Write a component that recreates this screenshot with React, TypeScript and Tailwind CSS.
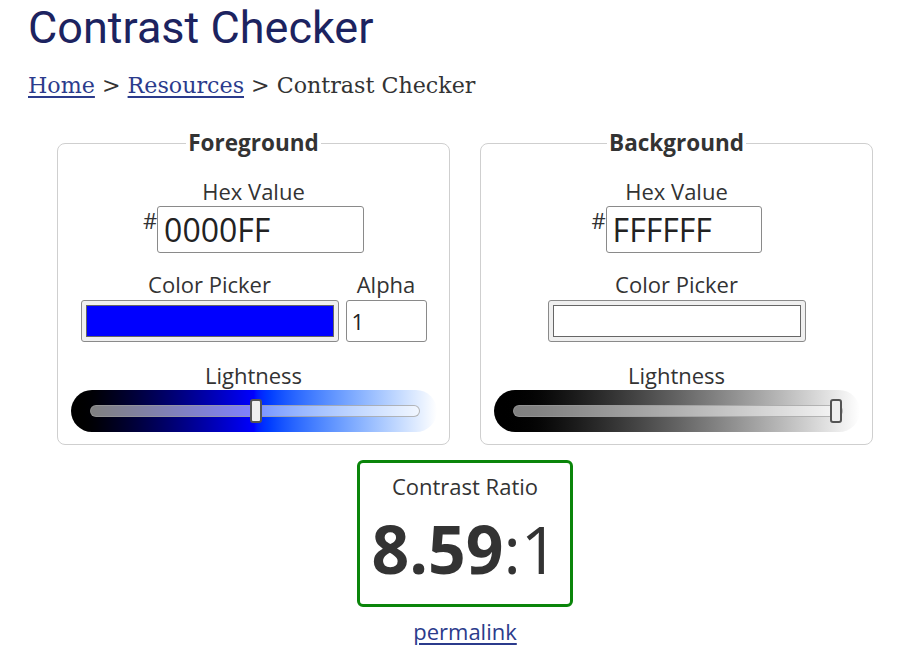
import React from "react";

const sans = { fontFamily: '"Open Sans", sans-serif' };

function Slider({ gradient, thumb }: { gradient: string; thumb: number }) {
  return (
    <div className={`relative mx-auto mt-[1px] h-[42px] w-[366px] rounded-full ${gradient}`}>
      <div className="absolute left-[19px] right-[17px] top-[15px] h-[12px] rounded-full border border-[#9a9a9a]/70 bg-white/50" />
      <div
        className="absolute top-[9px] h-[24px] w-[12px] rounded-[3px] border-2 border-[#555] bg-[#efefef]"
        style={{ left: thumb }}
      />
    </div>
  );
}

function Panel({
  title,
  hex,
  inputW,
  swatch,
  alpha,
  gradient,
  thumb,
}: {
  title: string;
  hex: string;
  inputW: string;
  swatch: string;
  alpha: boolean;
  gradient: string;
  thumb: number;
}) {
  return (
    <fieldset className="w-[393px] rounded-[8px] border border-[#cfcfcf] px-[12px] pb-[12px] pt-[20px] text-[#333]">
      <legend className="mx-auto px-[2px] text-[22.5px] font-bold leading-[28px]">{title}</legend>
      <div className="text-center text-[22px] leading-[28px]">Hex Value</div>
      <div className="mt-[1px] flex items-start justify-center">
        <span className="text-[22px] leading-[28px]">#</span>
        <input
          readOnly
          value={hex}
          className={`h-[47px] ${inputW} rounded-[3px] border border-[#8a8a8a] px-[6px] text-[32px] text-[#222] outline-none`}
          style={sans}
        />
      </div>
      <div className="mt-[17px] flex items-start justify-center gap-[7px]">
        <div className="flex flex-col items-center">
          <div className="text-[22px] leading-[28px]">Color Picker</div>
          <div className="mt-[2px] flex h-[42px] w-[258px] items-center justify-center rounded-[3px] border border-[#8a8a8a] bg-[#efefef] px-[4px]">
            <div className={`h-[32px] w-full border border-[#666] ${swatch}`} />
          </div>
        </div>
        {alpha && (
          <div className="flex flex-col items-center">
            <div className="text-[22px] leading-[28px]">Alpha</div>
            <input
              readOnly
              value="1"
              className="mt-[2px] h-[42px] w-[81px] rounded-[3px] border border-[#8a8a8a] px-[5px] text-[22px] text-[#222] outline-none"
              style={sans}
            />
          </div>
        )}
      </div>
      <div className="mt-[19px] text-center text-[22px] leading-[28px]">Lightness</div>
      <Slider gradient={gradient} thumb={thumb} />
    </fieldset>
  );
}

export default function App() {
  return (
    <div className="min-h-[650px] bg-white pl-[28px] pr-[19px] text-[#333]" style={sans}>
      <h1
        className="pt-[2px] text-[45px] font-normal leading-[52px] text-[#1c2360]"
        style={{ fontFamily: 'Roboto, sans-serif' }}
      >
        Contrast Checker
      </h1>
      <nav
        className="mt-[17px] text-[22.2px] leading-[28px] text-[#333]"
        style={{ fontFamily: '"DejaVu Serif", serif' }}
      >
        <a href="#" className="text-[#2b3b8c] underline underline-offset-[3px]">Home</a>
        {" > "}
        <a href="#" className="text-[#2b3b8c] underline underline-offset-[3px]">Resources</a>
        {" > Contrast Checker"}
      </nav>
      <div className="mt-[30px] flex justify-center gap-[30px]">
        <Panel
          title="Foreground"
          hex="0000FF"
          inputW="w-[207px]"
          swatch="bg-[#0000ff]"
          alpha={true}
          gradient="bg-gradient-to-r from-[#000000] via-[#0000ff] to-[#ffffff]"
          thumb={179}
        />
        <Panel
          title="Background"
          hex="FFFFFF"
          inputW="w-[156px]"
          swatch="bg-white"
          alpha={false}
          gradient="bg-gradient-to-r from-[#000000] to-[#ffffff]"
          thumb={336}
        />
      </div>
      <div className="mt-[15px] flex flex-col items-center">
        <div className="w-[216px] rounded-[6px] border-[3px] border-[#0a850a] pb-[23px] pt-[9px] text-center">
          <div className="text-[22px] leading-[28px]">Contrast Ratio</div>
          <div className="mt-[15px] text-[66px] leading-[66px]">
            <span className="font-bold">8.59</span>:1
          </div>
        </div>
        <a href="#" className="mt-[10px] text-[22px] leading-[28px] text-[#2b3b8c] underline underline-offset-[3px]">
          permalink
        </a>
      </div>
    </div>
  );
}
